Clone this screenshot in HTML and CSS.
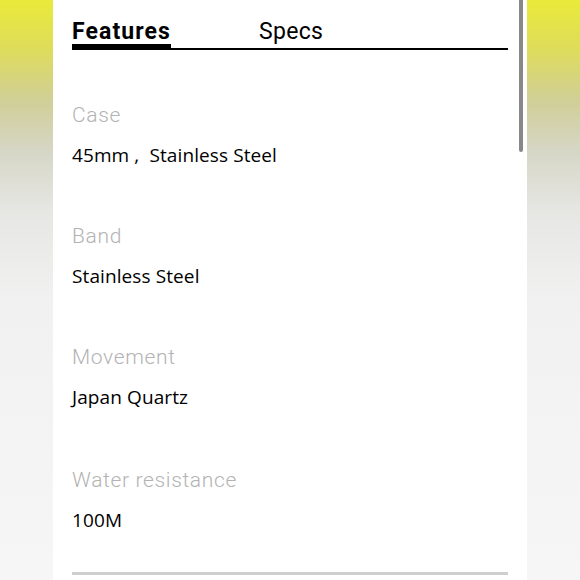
FILE: index.html
```html
<!DOCTYPE html>
<html>
<head>
<meta charset="utf-8">
<link rel="stylesheet" href="styles.css">
</head>
<body>
<div class="page">
  <div class="side"></div>
  <main class="panel">
    <div class="scrollbar"></div>
    <nav class="tabs">
      <div class="tab active">Features</div>
      <div class="tab">Specs</div>
    </nav>
    <dl class="specs">
      <div class="item">
        <dt>Case</dt>
        <dd>45mm ,&nbsp; Stainless Steel</dd>
      </div>
      <div class="item">
        <dt>Band</dt>
        <dd>Stainless Steel</dd>
      </div>
      <div class="item">
        <dt>Movement</dt>
        <dd>Japan Quartz</dd>
      </div>
      <div class="item">
        <dt>Water resistance</dt>
        <dd>100M</dd>
      </div>
    </dl>
    <div class="divider"></div>
  </main>
  <div class="side"></div>
</div>
</body>
</html>
```

FILE: styles.css
```css
html, body {
  margin: 0;
  padding: 0;
  width: 580px;
  height: 580px;
  overflow: hidden;
  background: #fff;
}

.page {
  display: flex;
  height: 580px;
}

.side {
  width: 53px;
  flex: none;
  background: linear-gradient(to bottom, #e9ea3a 0px, #dedc5c 50px, #d0cf96 100px, #d6d6c6 150px, #e6e6e3 210px, #f1f1f1 300px, #f6f6f6 580px);
}

.panel {
  position: relative;
  width: 474px;
  flex: none;
  background: #fff;
  padding: 0 19px;
  box-sizing: border-box;
}

.scrollbar {
  position: absolute;
  top: 0;
  right: 4px;
  width: 4px;
  height: 152px;
  background: #888;
  border-radius: 0 0 2px 2px;
}

.tabs {
  display: flex;
  align-items: flex-end;
  border-bottom: 2px solid #000;
  padding-top: 20px;
  font-family: "Roboto", sans-serif;
  font-size: 23px;
  line-height: 24px;
  color: #000;
}

.tab {
  padding-bottom: 4px;
  letter-spacing: 0.3px;
}

.tab.active {
  font-weight: 700;
  width: 99px;
  letter-spacing: 1.1px;
  border-bottom: 5px solid #000;
  margin-bottom: -1px;
  padding-bottom: 0;
  margin-right: 88px;
}

.specs {
  margin: 0;
  padding: 0;
}

.item {
  padding-top: 53px;
}

.item + .item {
  padding-top: 57px;
}

.item:last-child {
  padding-top: 59px;
}

dt {
  font-family: "Roboto", sans-serif;
  font-weight: 300;
  font-size: 21px;
  line-height: 24px;
  color: #b3b3b3;
  letter-spacing: 0.65px;
}

dd {
  margin: 16px 0 0;
  font-family: "Open Sans", sans-serif;
  font-size: 19px;
  line-height: 24px;
  color: #000;
  letter-spacing: 0.1px;
}

.divider {
  margin-top: 40px;
  height: 3px;
  background: #cfcfcf;
}
```
